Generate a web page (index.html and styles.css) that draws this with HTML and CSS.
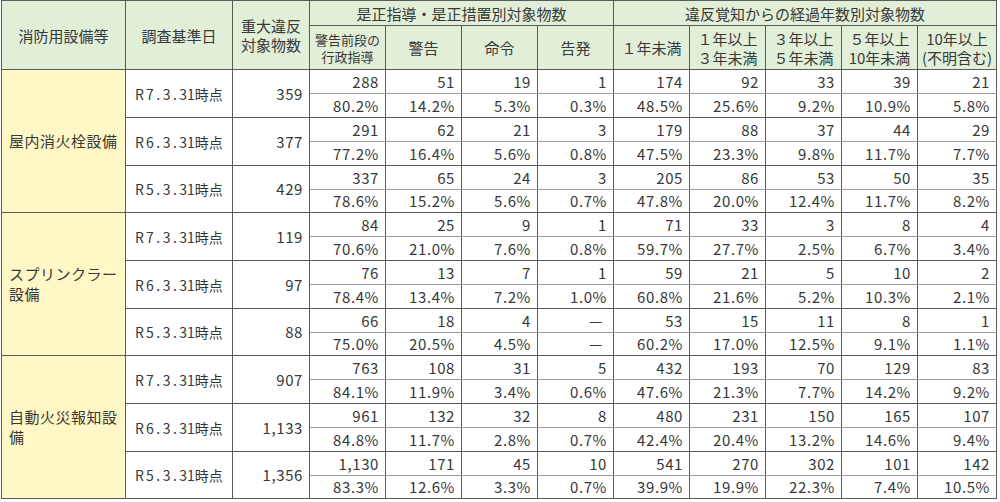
FILE: index.html
```html
<!DOCTYPE html>
<html lang="ja">
<head>
<meta charset="utf-8">
<link rel="stylesheet" href="styles.css">
</head>
<body>
<table class="tbl">
<colgroup>
<col class="c-eq"><col class="c-date"><col class="c-tot">
<col class="c-n"><col class="c-n"><col class="c-n"><col class="c-n">
<col class="c-n"><col class="c-n"><col class="c-n"><col class="c-n"><col class="c-last">
</colgroup>
<thead>
<tr class="h1">
<th rowspan="2">消防用設備等</th>
<th rowspan="2">調査基準日</th>
<th rowspan="2" class="two">重大違反<br>対象物数</th>
<th colspan="4">是正指導・是正措置別対象物数</th>
<th colspan="5">違反覚知からの経過年数別対象物数</th>
</tr>
<tr class="h2">
<th class="small">警告前段の<br>行政指導</th>
<th>警告</th>
<th>命令</th>
<th>告発</th>
<th>１年未満</th>
<th class="two">１年以上<br>３年未満</th>
<th class="two">３年以上<br>５年未満</th>
<th class="two">５年以上<br>10年未満</th>
<th class="two">10年以上<br>(不明含む)</th>
</tr>
</thead>
<tbody>
<tr class="ra"><td rowspan="6" class="eq grp">屋内消火栓設備</td><td rowspan="2" class="date">R<span class="sp">7.3.</span>31時点</td><td rowspan="2" class="tot">359</td><td>288</td><td>51</td><td>19</td><td>1</td><td>174</td><td>92</td><td>33</td><td>39</td><td>21</td></tr>
<tr class="rb"><td>80.2%</td><td>14.2%</td><td>5.3%</td><td>0.3%</td><td>48.5%</td><td>25.6%</td><td>9.2%</td><td>10.9%</td><td>5.8%</td></tr>
<tr class="ra"><td rowspan="2" class="date">R<span class="sp">6.3.</span>31時点</td><td rowspan="2" class="tot">377</td><td>291</td><td>62</td><td>21</td><td>3</td><td>179</td><td>88</td><td>37</td><td>44</td><td>29</td></tr>
<tr class="rb"><td>77.2%</td><td>16.4%</td><td>5.6%</td><td>0.8%</td><td>47.5%</td><td>23.3%</td><td>9.8%</td><td>11.7%</td><td>7.7%</td></tr>
<tr class="ra"><td rowspan="2" class="date">R<span class="sp">5.3.</span>31時点</td><td rowspan="2" class="tot">429</td><td>337</td><td>65</td><td>24</td><td>3</td><td>205</td><td>86</td><td>53</td><td>50</td><td>35</td></tr>
<tr class="rb rc"><td>78.6%</td><td>15.2%</td><td>5.6%</td><td>0.7%</td><td>47.8%</td><td>20.0%</td><td>12.4%</td><td>11.7%</td><td>8.2%</td></tr>

<tr class="ra"><td rowspan="6" class="eq grp">スプリンクラー設備</td><td rowspan="2" class="date">R<span class="sp">7.3.</span>31時点</td><td rowspan="2" class="tot">119</td><td>84</td><td>25</td><td>9</td><td>1</td><td>71</td><td>33</td><td>3</td><td>8</td><td>4</td></tr>
<tr class="rb"><td>70.6%</td><td>21.0%</td><td>7.6%</td><td>0.8%</td><td>59.7%</td><td>27.7%</td><td>2.5%</td><td>6.7%</td><td>3.4%</td></tr>
<tr class="ra"><td rowspan="2" class="date">R<span class="sp">6.3.</span>31時点</td><td rowspan="2" class="tot">97</td><td>76</td><td>13</td><td>7</td><td>1</td><td>59</td><td>21</td><td>5</td><td>10</td><td>2</td></tr>
<tr class="rb"><td>78.4%</td><td>13.4%</td><td>7.2%</td><td>1.0%</td><td>60.8%</td><td>21.6%</td><td>5.2%</td><td>10.3%</td><td>2.1%</td></tr>
<tr class="ra"><td rowspan="2" class="date">R<span class="sp">5.3.</span>31時点</td><td rowspan="2" class="tot">88</td><td>66</td><td>18</td><td>4</td><td class="dash">—</td><td>53</td><td>15</td><td>11</td><td>8</td><td>1</td></tr>
<tr class="rb rc"><td>75.0%</td><td>20.5%</td><td>4.5%</td><td class="dash">—</td><td>60.2%</td><td>17.0%</td><td>12.5%</td><td>9.1%</td><td>1.1%</td></tr>

<tr class="ra"><td rowspan="6" class="eq grp">自動火災報知設備</td><td rowspan="2" class="date">R<span class="sp">7.3.</span>31時点</td><td rowspan="2" class="tot">907</td><td>763</td><td>108</td><td>31</td><td>5</td><td>432</td><td>193</td><td>70</td><td>129</td><td>83</td></tr>
<tr class="rb"><td>84.1%</td><td>11.9%</td><td>3.4%</td><td>0.6%</td><td>47.6%</td><td>21.3%</td><td>7.7%</td><td>14.2%</td><td>9.2%</td></tr>
<tr class="ra"><td rowspan="2" class="date">R<span class="sp">6.3.</span>31時点</td><td rowspan="2" class="tot">1,133</td><td>961</td><td>132</td><td>32</td><td>8</td><td>480</td><td>231</td><td>150</td><td>165</td><td>107</td></tr>
<tr class="rb"><td>84.8%</td><td>11.7%</td><td>2.8%</td><td>0.7%</td><td>42.4%</td><td>20.4%</td><td>13.2%</td><td>14.6%</td><td>9.4%</td></tr>
<tr class="ra"><td rowspan="2" class="date">R<span class="sp">5.3.</span>31時点</td><td rowspan="2" class="tot">1,356</td><td>1,130</td><td>171</td><td>45</td><td>10</td><td>541</td><td>270</td><td>302</td><td>101</td><td>142</td></tr>
<tr class="rb rc"><td>83.3%</td><td>12.6%</td><td>3.3%</td><td>0.7%</td><td>39.9%</td><td>19.9%</td><td>22.3%</td><td>7.4%</td><td>10.5%</td></tr>
</tbody>
</table>
</body>
</html>
```
FILE: styles.css
```css
html, body {
  margin: 0;
  padding: 0;
  background: #ffffff;
}
body {
  padding: 0 0 0 1px;
  font-family: "Noto Sans CJK JP", "Noto Sans", sans-serif;
  color: #383838;
}
.tbl {
  border-collapse: collapse;
  table-layout: fixed;
  width: 996px;
  font-size: 15px;
}
.c-eq { width: 124px; }
.c-date { width: 107px; }
.c-tot { width: 77px; }
.c-n { width: 76px; }
.c-last { width: 79px; }

.tbl th, .tbl td {
  border: 1px solid #5a5a5a;
  padding: 0;
  overflow: hidden;
  white-space: nowrap;
}
.tbl th {
  background: #e2efd8;
  font-weight: normal;
  text-align: center;
  line-height: 19px;
}
.h1 { height: 25px; }
.h2 { height: 44px; }
.tbl th.small {
  font-size: 13px;
  line-height: 17px;
}
.tbl td {
  text-align: right;
  padding-right: 6px;
  letter-spacing: 0.6px;
  line-height: 20px;
}
.ra { height: 24px; }
.rb { height: 24px; }
.rb.rc { height: 23px; }
.ra td { border-bottom-color: #9a9a9a; }
.rb td { border-top-color: #9a9a9a; }
.ra td.date, .ra td.tot, .ra td.eq { border-bottom-color: #5a5a5a; }
.tbl td.eq {
  background: #fff7c6;
  text-align: left;
  white-space: normal;
  padding: 0 6px 0 7px;
  letter-spacing: 0.5px;
  line-height: 20px;
}
.tbl td.date {
  text-align: center;
  padding: 0;
  font-size: 14px;
  letter-spacing: 0;
}
.sp { letter-spacing: 2.5px; padding-left: 2px; }
.tbl td.tot {
  padding-right: 6px;
}
.tbl td.dash {
  padding-right: 10px;
}
```
